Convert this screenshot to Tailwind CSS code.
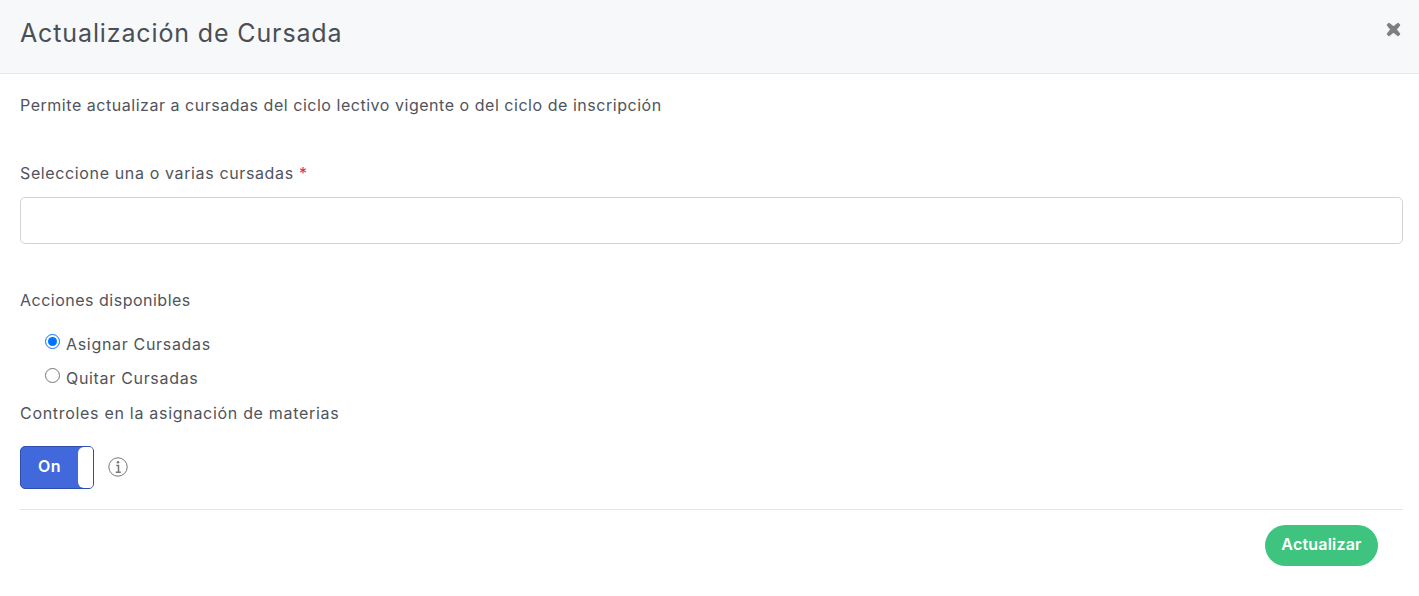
<!DOCTYPE html>
<html lang="es">
<head>
  <meta charset="UTF-8" />
  <title>Actualización de Cursada</title>
  <script src="https://cdn.jsdelivr.net/npm/@tailwindcss/browser@4"></script>
</head>
<body class="bg-white text-[#50545c] font-['Inter',sans-serif] text-[16px] overflow-hidden">
  <!-- header -->
  <div class="h-[74px] bg-[#f7f8fa] border-b border-[#e6e8ec] flex justify-between pl-5 pr-[18px]">
    <h1 class="text-[25px] tracking-[0.87px] leading-[66px] text-[#4a4e55]">Actualización de Cursada</h1>
    <svg class="w-[15px] h-[15px] mt-[22px]" viewBox="0 0 15 15"><path d="M3 1.5 7.5 5 12 1.5 13.5 3 10 7.5 13.5 12 12 13.5 7.5 10 3 13.5 1.5 12 5 7.5 1.5 3Z" fill="#7f7f7f" stroke="#7f7f7f" stroke-width="1.5" stroke-linejoin="round"/></svg>
  </div>

  <div class="px-5 pr-4">
    <p class="mt-[20px] leading-[22px] tracking-[0.53px]">Permite actualizar a cursadas del ciclo lectivo vigente o del ciclo de inscripción</p>

    <label class="block mt-[46px] leading-[22px] tracking-[0.63px]">Seleccione una o varias cursadas <span class="text-[#e0284f]">*</span></label>
    <input type="text" class="block w-full h-[47px] mt-[13px] border border-[#ced4da] rounded-[5px] bg-white" />

    <p class="mt-[45px] leading-[22px] tracking-[0.5px]">Acciones disponibles</p>
    <div class="mt-[16px] pl-[25px] tracking-[0.68px]">
      <label class="flex items-center gap-[6px] h-[34px]"><input type="radio" name="accion" checked class="m-0 w-[15px] h-[15px] accent-[#0075ff] -translate-y-[3px]" />Asignar Cursadas</label>
      <label class="flex items-center gap-[6px] h-[34px]"><input type="radio" name="accion" class="m-0 w-[15px] h-[15px] accent-[#0075ff] -translate-y-[3px]" />Quitar Cursadas</label>
    </div>
    <p class="mt-[7px] leading-[22px] tracking-[0.7px]">Controles en la asignación de materias</p>

    <div class="flex items-center mt-[22px]">
      <div class="w-[74px] h-[43px] rounded-[5px] border border-[#2f4fb0] bg-[#4169db] flex overflow-hidden">
        <span class="flex-1 text-center text-white font-semibold tracking-[0.5px] leading-[39px]">On</span>
        <span class="w-[15px] bg-white rounded-l-[6px]"></span>
      </div>
      <svg class="w-5 h-5 ml-[14px] -mt-[1px]" viewBox="0 0 20 20" fill="none"><circle cx="10" cy="10" r="9.2" stroke="#777" stroke-width="1"/><circle cx="10" cy="5.2" r="1.3" fill="#777"/><path d="M8.2 8.4h2.3v6.6M7.8 15.2h5" stroke="#777" stroke-width="1.5"/></svg>
    </div>

    <div class="mt-5 border-t border-[#e4e4ec] pt-[15px] flex justify-end pr-[25px]">
      <button class="w-[113px] h-[41px] pb-[3px] rounded-full bg-[#3ec47e] text-white font-semibold tracking-[0.2px]">Actualizar</button>
    </div>
  </div>
</body>
</html>
